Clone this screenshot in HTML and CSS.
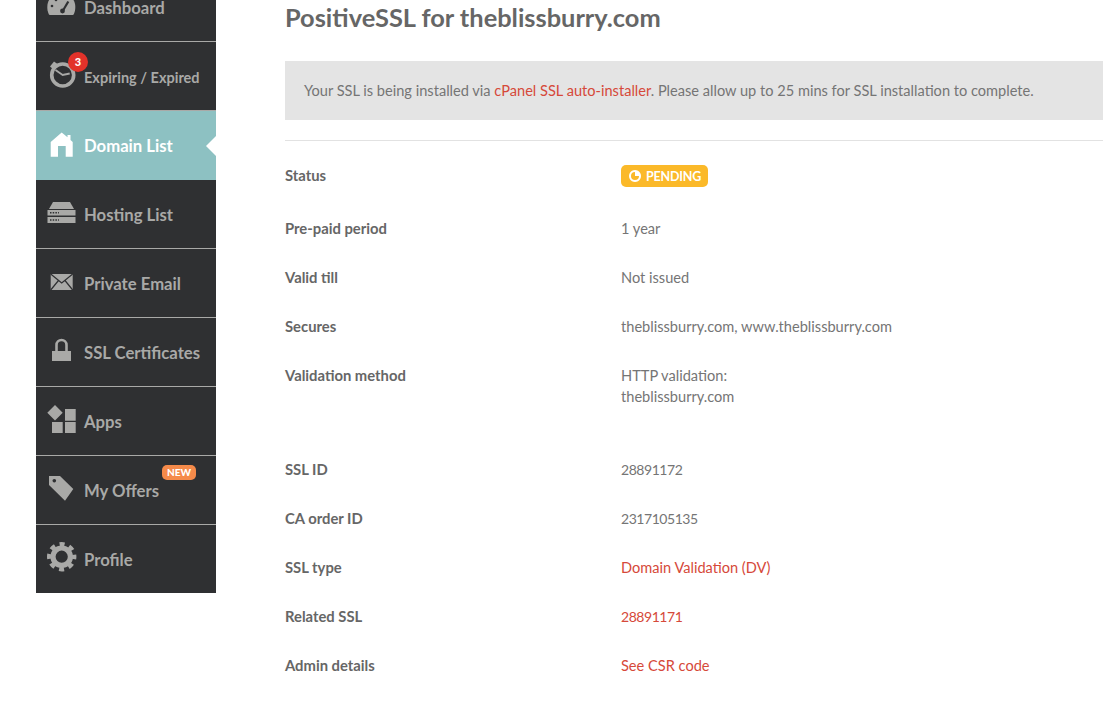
FILE: index.html
```html
<!DOCTYPE html>
<html lang="en">
<head>
  <meta charset="UTF-8" />
  <title>PositiveSSL for theblissburry.com</title>
  <link rel="stylesheet" href="styles.css">
</head>
<body>
  <div class="page">
    <nav class="sidebar">
      <a class="nav-item">
        <svg class="nav-icon" viewBox="0 0 29 29"><path d="M14.300 1C6.500 1 .3 7 .3 15c0 2.500.4 4.500 1.200 6.500.4 1 1 1.500 2 1.500h21.600c1 0 1.600-.5 2-1.500.8-2 1.200-4 1.200-6.500 0-8-6.200-14-14-14z"/><path d="M16.300 18l5-8.500" stroke="#2f3032" stroke-width="2.200" fill="none"/><circle cx="15.500" cy="19" r="2.400" fill="#2f3032"/><circle cx="5" cy="14" r="1.300" fill="#2f3032"/><circle cx="9" cy="8" r="1.300" fill="#2f3032"/><circle cx="15" cy="5.500" r="1.300" fill="#2f3032"/></svg>
        <span>Dashboard</span>
      </a>
      <a class="nav-item">
        <svg class="nav-icon" viewBox="0 0 29 29"><circle cx="15.700" cy="14" r="11" fill="none" stroke="#a9a9a7" stroke-width="3.600"/><path d="M3 5.500L7 .5l3.500 2.500-4 5.500z"/><path d="M8.500 9l7.200 5 7-1.500" stroke="#a9a9a7" stroke-width="1.800" fill="none"/></svg>
        <span class="nav-small">Expiring / Expired</span>
        <b class="count">3</b>
      </a>
      <a class="nav-item active">
        <svg class="nav-icon" viewBox="0 0 29 29"><path d="M14.700 2.600L3.700 12v14.700H11V16h7.700v10.700h7V12l-2.200-2V5h-3v2.200z"/></svg>
        <span>Domain List</span>
      </a>
      <a class="nav-item">
        <svg class="nav-icon" viewBox="0 0 29 29"><path d="M6 3h17l4 7H2z"/><path d="M.5 11h28v5.500H.5zM.5 18h28v6H.5z"/><path d="M3 13.700h9M3 21h9" stroke="#2f3032" stroke-width="1.500" stroke-dasharray="1.500 1.200" fill="none"/></svg>
        <span>Hosting List</span>
      </a>
      <a class="nav-item">
        <svg class="nav-icon" viewBox="0 0 29 29"><path d="M3.700 6h22v16h-22z"/><path d="M3.700 6l11 9 11-9M3.700 22l7.800-9.500M25.700 22L18 12.500" stroke="#2f3032" stroke-width="1.200" fill="none"/></svg>
        <span>Private Email</span>
      </a>
      <a class="nav-item">
        <svg class="nav-icon" viewBox="0 0 29 29"><path d="M5 14h19v10H5z"/><path d="M9.500 15V8a5 5 0 0 1 10 0v7" fill="none" stroke="#a9a9a7" stroke-width="2.600"/></svg>
        <span>SSL Certificates</span>
      </a>
      <a class="nav-item">
        <svg class="nav-icon" viewBox="0 0 29 29"><path d="M8 -1l7.700 7.700L8 14.400.3 6.700zM18 3h10.700v11.700H18zM5 16h10.700v11H5zM18 16h10.700v11H18z"/></svg>
        <span>Apps</span>
      </a>
      <a class="nav-item">
        <svg class="nav-icon" viewBox="0 0 29 29"><path fill-rule="evenodd" d="M2 1h11l13.300 13L18 25.700 2 10zM7.300 3.900a1.800 1.800 0 1 0 .01 0z"/></svg>
        <span>My Offers</span>
        <b class="new-tag">NEW</b>
      </a>
      <a class="nav-item">
        <svg class="nav-icon" viewBox="0 0 29 29"><circle cx="14.700" cy="12.700" r="8.700" fill="none" stroke="#a9a9a7" stroke-width="5.200"/><circle cx="14.700" cy="12.700" r="12.500" fill="none" stroke="#a9a9a7" stroke-width="4.400" stroke-dasharray="5 4.817" stroke-dashoffset="2.500"/></svg>
        <span>Profile</span>
      </a>
    </nav>

    <main class="content">
      <h1>PositiveSSL for theblissburry.com</h1>
      <div class="notice">Your SSL is being installed via <a>cPanel SSL auto-installer</a>. Please allow up to 25 mins for SSL installation to complete.</div>
      <hr>
      <dl class="details">
        <dt class="status-row">Status</dt>
        <dd class="status-row">
          <span class="pending">
            <svg viewBox="0 0 12 12"><path fill-rule="evenodd" d="M6 0a6 6 0 1 0 .01 0zM6 2v4h4a4 4 0 1 1-4-4z"/></svg>
            PENDING
          </span>
        </dd>
        <dt>Pre-paid period</dt><dd>1 year</dd>
        <dt>Valid till</dt><dd>Not issued</dd>
        <dt>Secures</dt><dd>theblissburry.com, www.theblissburry.com</dd>
        <dt class="tall">Validation method</dt><dd class="tall">HTTP validation:<br>theblissburry.com</dd>
        <dt>SSL ID</dt><dd class="num">28891172</dd>
        <dt>CA order ID</dt><dd class="num">2317105135</dd>
        <dt>SSL type</dt><dd><a>Domain Validation (DV)</a></dd>
        <dt>Related SSL</dt><dd class="num"><a>28891171</a></dd>
        <dt>Admin details</dt><dd><a>See CSR code</a></dd>
      </dl>
    </main>
  </div>
</body>
</html>
```
FILE: styles.css
```css
html, body {
  height: 715px;
  overflow: hidden;
}
body {
  margin: 0;
  font-family: Lato, "Open Sans", sans-serif;
  background: #fff;
  color: #666;
}
.page {
  display: flex;
  align-items: flex-start;
}
.sidebar {
  width: 180px;
  margin: -27px 0 0 36px;
  flex-shrink: 0;
  background: #2f3032;
}
.nav-item {
  position: relative;
  display: flex;
  align-items: center;
  height: 68px;
  border-bottom: 1px solid #a9a9a7;
  color: #a9a9a7;
  font-size: 16.7px;
  font-weight: 700;
}
.nav-item:last-child {
  border-bottom: none;
}
.nav-item span {
  margin: 2px 0 0 48px;
}
.nav-icon {
  position: absolute;
  left: 11px;
  top: 19px;
  width: 29px;
  height: 29px;
  fill: #a9a9a7;
  overflow: visible;
}
.nav-item .nav-small {
  font-size: 14.5px;
}
.active {
  background: #8dc1c2;
  color: #fff;
  border-bottom-color: #8dc1c2;
}
.active .nav-icon {
  fill: #fff;
}
.active::after {
  content: "";
  position: absolute;
  right: 0;
  top: 25px;
  border: 10px solid transparent;
  border-left: none;
  border-right-color: #fff;
}
.count {
  position: absolute;
  left: 32px;
  top: 10px;
  width: 20px;
  height: 20px;
  border-radius: 50%;
  background: #e2322a;
  color: #fff;
  font-size: 11px;
  line-height: 20px;
  text-align: center;
}
.new-tag {
  position: absolute;
  right: 20px;
  top: 9px;
  padding: 0 5px;
  height: 15px;
  border-radius: 5px;
  background: #f58a4a;
  color: #fff;
  font-size: 10px;
  line-height: 15px;
}
.content {
  flex: 1;
  margin-left: 69px;
  min-width: 0;
}
h1 {
  margin: 0;
  font-size: 25.4px;
  line-height: 35px;
  font-weight: 700;
  color: #666;
}
.notice {
  margin-top: 26px;
  height: 59px;
  padding-left: 19px;
  background: #e4e4e4;
  font-size: 14.6px;
  line-height: 59px;
  color: #757575;
}
a {
  color: #d6493a;
}
hr {
  margin: 20px 0 0;
  border: none;
  border-top: 1px solid #e2e2e2;
}
.details {
  display: grid;
  grid-template-columns: 336px 1fr;
  margin: 0;
  padding-top: 24px;
  font-size: 14.6px;
  line-height: 21px;
}
.details dt {
  height: 49px;
  font-weight: 700;
  font-size: 14.8px;
}
.details dd {
  height: 49px;
  margin: 0;
  color: #757575;
}
.details .num {
  font-size: 14px;
  letter-spacing: -0.45px;
}
.details .status-row {
  height: 53px;
}
.details dd.status-row {
  height: 53px;
}
.details .tall {
  height: 94px;
}
.pending {
  display: inline-flex;
  align-items: center;
  gap: 5px;
  height: 22px;
  padding: 0 7px 0 8px;
  border-radius: 5px;
  background: #fbb929;
  color: #fff;
  font-size: 12.5px;
  font-weight: 700;
  letter-spacing: -0.2px;
}
.pending svg {
  width: 12px;
  height: 12px;
  fill: #fff;
}
```
